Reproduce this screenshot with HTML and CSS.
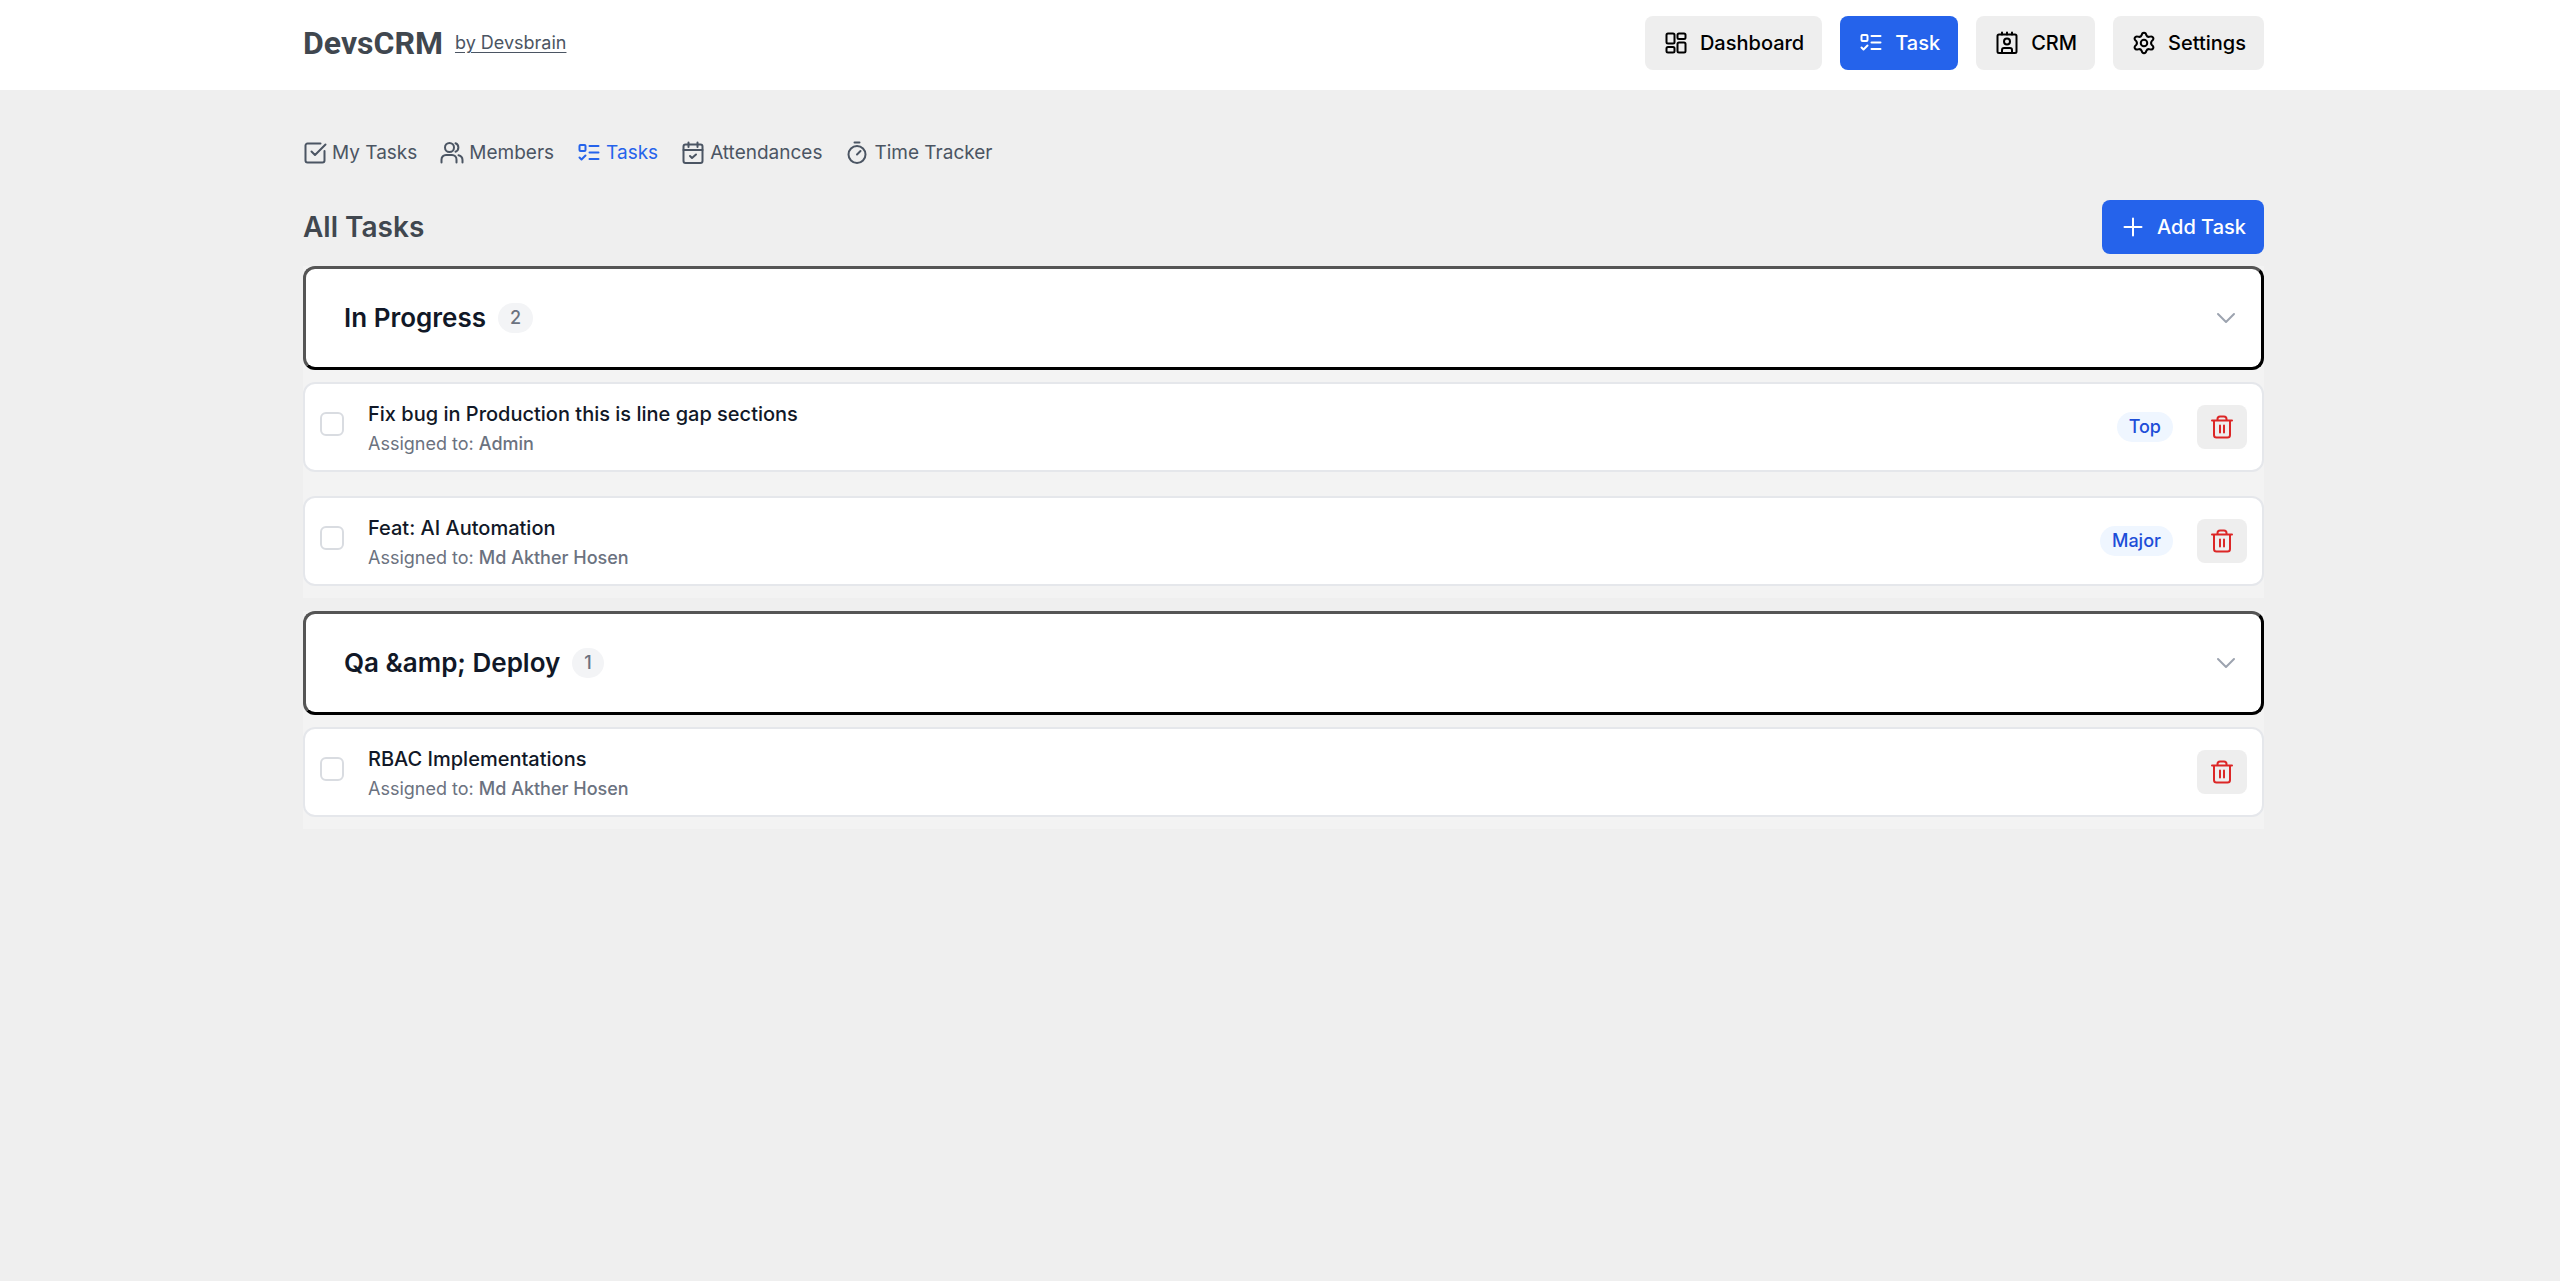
FILE: index.html
```html
<!DOCTYPE html>
<html lang="en">
<head>
    <meta charset="UTF-8">
    <meta name="viewport" content="width=device-width, initial-scale=1.0">
    <title>DevsCRM - All Tasks</title>
    <link rel="stylesheet" href="styles.css">
</head>
<body>

    <!-- Icons shared by several controls -->
    <svg class="sprite" aria-hidden="true">
        <symbol id="icon-list" viewBox="0 0 24 24">
            <rect x="2.5" y="4" width="6" height="6" rx="1"/>
            <path d="M2.5 16.5 4.5 18.5 8.5 14.5M12.5 5H21.5M12.5 11.5H21.5M12.5 18H21.5"/>
        </symbol>
        <symbol id="icon-trash" viewBox="0 0 24 24">
            <path d="M2 5.500H22M4 5.500V20A2.500 2.500 0 0 0 6.500 22.500H17.500A2.500 2.500 0 0 0 20 20V5.500M7.500 5.500V4A2.500 2.500 0 0 1 10 1.500H14A2.500 2.500 0 0 1 16.500 4V5.500M10 10.500V17.500M14 10.500V17.500"/>
        </symbol>
        <symbol id="icon-chevron" viewBox="0 0 24 24">
            <path d="M4 8 12 16 20 8"/>
        </symbol>
    </svg>

    <header class="header">
        <div class="container header-inner">
            <div class="brand">
                <span class="logo">DevsCRM</span>
                <a href="#" class="byline">by Devsbrain</a>
            </div>
            <nav class="main-nav">
                <button type="button" class="btn">
                    <svg class="icon" viewBox="0 0 24 24"><rect x="2.5" y="2.5" width="8" height="10" rx="1.5"/><rect x="13.5" y="2.5" width="8" height="5.5" rx="1.5"/><rect x="2.5" y="16" width="8" height="5.5" rx="1.5"/><rect x="13.5" y="11.5" width="8" height="10" rx="1.5"/></svg>
                    Dashboard
                </button>
                <button type="button" class="btn btn-primary">
                    <svg class="icon"><use href="#icon-list"/></svg>
                    Task
                </button>
                <button type="button" class="btn">
                    <svg class="icon" viewBox="0 0 24 24"><rect x="2.5" y="3.5" width="19" height="18.5" rx="1.5"/><circle cx="12" cy="10.5" r="3"/><path d="M7 1.5V3.5M12 1.5V3.5M17 1.5V3.5M7 22V19A2 2 0 0 1 9 17H15A2 2 0 0 1 17 19V22"/></svg>
                    CRM
                </button>
                <button type="button" class="btn">
                    <svg class="icon" viewBox="0 0 24 24"><circle cx="12" cy="12" r="3.25"/><path d="M9.6 4.3Q10 1.8 12 1.8T14.4 4.3Q15.5 6.6 18 5.6Q20.400 5 21.2 6.7T19.8 10Q18.3 12 19.8 14Q22 15.6 21.2 17.3T18 18.4Q15.5 17.4 14.4 19.7Q14 22.2 12 22.2T9.6 19.7Q8.5 17.4 6 18.4Q3.6 19 2.8 17.3T4.2 14Q5.7 12 4.2 10Q2 8.4 2.8 6.7T6 5.6Q8.5 6.6 9.6 4.3Z"/></svg>
                    Settings
                </button>
            </nav>
        </div>
    </header>

    <main class="container">
        <nav class="tabs">
            <a href="#" class="tab">
                <svg class="icon" viewBox="0 0 24 24"><path d="M17.5 2.5H4.5A2 2 0 0 0 2.5 4.5V19.5A2 2 0 0 0 4.5 21.5H19.5A2 2 0 0 0 21.5 19.5V10M8.5 10.5 12 14 22.5 3.5"/></svg>
                My Tasks
            </a>
            <a href="#" class="tab">
                <svg class="icon" viewBox="0 0 24 24"><circle cx="9.5" cy="6.5" r="4.5"/><path d="M1.5 21.5V18.5A4.5 4.5 0 0 1 6 14H12A4.5 4.5 0 0 1 16.5 18.5V21.5M15.5 2.3A4.5 4.5 0 0 1 15.5 10.7M18.5 14.2A5 5 0 0 1 22.5 19V21.5"/></svg>
                Members
            </a>
            <a href="#" class="tab active">
                <svg class="icon"><use href="#icon-list"/></svg>
                Tasks
            </a>
            <a href="#" class="tab">
                <svg class="icon" viewBox="0 0 24 24"><rect x="2.5" y="3.5" width="19" height="18.5" rx="2"/><path d="M2.5 9H21.5M7.5 1.5V6M16.5 1.5V6M9 15 11 17 15 13.5"/></svg>
                Attendances
            </a>
            <a href="#" class="tab">
                <svg class="icon" viewBox="0 0 24 24"><circle cx="12" cy="13.5" r="8.5"/><path d="M9.5 1.5H14.5M12 13.5 15.5 10"/></svg>
                Time Tracker
            </a>
        </nav>

        <div class="page-title">
            <h1>All Tasks</h1>
            <button type="button" class="btn btn-primary">
                <svg class="icon" viewBox="0 0 24 24"><path d="M3.5 12H20.5M12 3.5V20.5"/></svg>
                Add Task
            </button>
        </div>

        <section class="group">
            <button type="button" class="group-header">
                <span class="group-name">In Progress</span>
                <span class="count">2</span>
                <svg class="icon chevron"><use href="#icon-chevron"/></svg>
            </button>
            <ul class="task-list">
                <li class="task">
                    <input type="checkbox" id="task-1">
                    <div class="task-info">
                        <label for="task-1">Fix bug in Production this is line gap sections</label>
                        <p>Assigned to: <strong>Admin</strong></p>
                    </div>
                    <span class="priority">Top</span>
                    <button type="button" class="btn-delete" aria-label="Delete">
                        <svg class="icon"><use href="#icon-trash"/></svg>
                    </button>
                </li>
                <li class="task">
                    <input type="checkbox" id="task-2">
                    <div class="task-info">
                        <label for="task-2">Feat: AI Automation</label>
                        <p>Assigned to: <strong>Md Akther Hosen</strong></p>
                    </div>
                    <span class="priority">Major</span>
                    <button type="button" class="btn-delete" aria-label="Delete">
                        <svg class="icon"><use href="#icon-trash"/></svg>
                    </button>
                </li>
            </ul>
        </section>

        <section class="group">
            <button type="button" class="group-header">
                <span class="group-name">Qa &amp;amp; Deploy</span>
                <span class="count">1</span>
                <svg class="icon chevron"><use href="#icon-chevron"/></svg>
            </button>
            <ul class="task-list">
                <li class="task">
                    <input type="checkbox" id="task-3">
                    <div class="task-info">
                        <label for="task-3">RBAC Implementations</label>
                        <p>Assigned to: <strong>Md Akther Hosen</strong></p>
                    </div>
                    <button type="button" class="btn-delete" aria-label="Delete">
                        <svg class="icon"><use href="#icon-trash"/></svg>
                    </button>
                </li>
            </ul>
        </section>
    </main>

</body>
</html>
```

FILE: styles.css
```css
* {
    box-sizing: border-box;
}
body {
    font-family: Inter, 'Liberation Sans', sans-serif;
    font-size: 20px;
    line-height: 30px;
    margin: 0;
    background-color: #efefef;
    color: #111827;
}
h1, p, ul {
    margin: 0;
    padding: 0;
}
button {
    font: inherit;
    border: none;
    cursor: pointer;
}
.sprite {
    display: none;
}
.icon {
    width: 24px;
    height: 24px;
    flex-shrink: 0;
    fill: none;
    stroke: currentColor;
    stroke-width: 2;
    stroke-linecap: round;
    stroke-linejoin: round;
}
.container {
    max-width: 1968px;
    margin: 0 auto;
    padding-left: 7px;
}

/* Header */
.header {
    background-color: white;
    padding: 16px 0 20px;
}
.header-inner {
    display: flex;
    justify-content: space-between;
    align-items: center;
}
.brand {
    display: flex;
    align-items: center;
    gap: 12px;
}
.logo {
    font-family: Roboto, sans-serif;
    font-size: 32px;
    font-weight: bold;
    color: #40474f;
}
.byline {
    font-size: 18px;
    color: #4b5563;
    text-underline-offset: 3px;
}
.main-nav {
    display: flex;
    gap: 18px;
}
.btn {
    display: flex;
    align-items: center;
    gap: 12px;
    padding: 12px 18px 12px 19px;
    border-radius: 8px;
    background-color: #eeeeee;
    color: black;
    font-weight: 500;
}
.btn-primary {
    background-color: #2563eb;
    color: white;
}

/* Tabs */
.tabs {
    display: flex;
    gap: 23px;
    padding: 48px 0 32px;
}
.tab {
    display: flex;
    align-items: center;
    gap: 5px;
    font-size: 19px;
    color: #4b5563;
    text-decoration: none;
}
.tab.active {
    color: #2563eb;
}
.page-title {
    display: flex;
    justify-content: space-between;
    align-items: center;
    margin-bottom: 12px;
}
.page-title h1 {
    font-size: 28px;
    font-weight: 600;
    color: #40474f;
}

/* Task groups */
.group {
    background-color: #f3f3f3;
    margin-bottom: 13px;
}
.group-header {
    display: flex;
    align-items: center;
    gap: 12px;
    width: 100%;
    padding: 34px 23px 34px 38px;
    border: 3px solid;
    border-color: #555555 black black #555555;
    border-radius: 12px;
    background-color: white;
    color: #111827;
}
.group-name {
    font-size: 26px;
    font-weight: 600;
}
.count,
.priority {
    padding: 0 12px;
    border-radius: 15px;
    font-size: 18px;
    font-weight: 500;
}
.count {
    background-color: #f3f4f6;
    color: #6b7280;
}
.chevron {
    margin-left: auto;
    color: #9ca3af;
}
.task-list {
    list-style: none;
    padding: 12px 0;
    display: grid;
    gap: 24px;
}
.task {
    display: flex;
    align-items: center;
    gap: 24px;
    padding: 11px 15px;
    border: 2px solid #e5e7eb;
    border-radius: 12px;
    background-color: white;
}
.task input {
    appearance: none;
    width: 24px;
    height: 24px;
    margin: 0 0 6px;
    border: 2px solid #d9dce1;
    border-radius: 6px;
    background-color: white;
}
.task input:checked {
    background-color: #2563eb;
}
.task-info {
    flex: 1;
    padding-top: 4px;
}
.task-info label {
    display: block;
    font-weight: 500;
}
.task-info p {
    font-size: 18px;
    color: #6b7280;
}
.task-info strong {
    font-weight: 500;
}
.priority {
    background-color: #eff6ff;
    color: #1d4ed8;
}
.btn-delete {
    display: flex;
    padding: 10px 13px;
    border-radius: 8px;
    background-color: #eeeeee;
    color: #dc2626;
}
```
